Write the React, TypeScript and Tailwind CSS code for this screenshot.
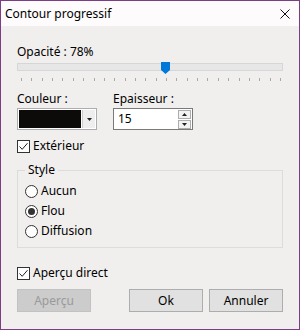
import React from 'react';

const font = { fontFamily: '"Segoe UI", "Noto Sans", "Open Sans", sans-serif' };

const CheckBox: React.FC<{ label: string }> = ({ label }) => (
  <div className="flex items-center h-[16px]">
    <div className="w-[13px] h-[13px] border border-[#333] bg-white flex items-center justify-center">
      <svg width="11" height="11" viewBox="0 0 11 11">
        <path d="M1.5 5.5 L4.2 8.3 L9.5 2.2" fill="none" stroke="#222" strokeWidth="1" />
      </svg>
    </div>
    <span className="ml-[3px] text-[12px] text-black">{label}</span>
  </div>
);

const Radio: React.FC<{ label: string; checked?: boolean }> = ({ label, checked }) => (
  <div className="flex items-center h-[20px]">
    <div className="w-[13px] h-[13px] rounded-full border border-[#333] bg-white flex items-center justify-center">
      {checked && <div className="w-[7px] h-[7px] rounded-full bg-[#333]" />}
    </div>
    <span className="ml-[3px] text-[12px] text-black">{label}</span>
  </div>
);

export default function App() {
  const ticks = Array.from({ length: 26 }, (_, i) => i);

  return (
    <div style={font} className="w-[300px] h-[330px] border border-[#7a3d86] bg-[#f0efee] flex flex-col select-none">
      <div className="h-[25px] bg-[#fdfbfb] flex items-center justify-between pl-[4px] pr-[9px]">
        <span className="text-[12px] text-black">Contour progressif</span>
        <svg width="10" height="10" viewBox="0 0 10 10">
          <path d="M0.5 0.5 L9.5 9.5 M9.5 0.5 L0.5 9.5" stroke="#111" strokeWidth="1" />
        </svg>
      </div>

      <div className="flex flex-col px-[16px] pt-[18px]">
        <div className="text-[12px] leading-[16px] text-black">Opacité : 78%</div>

        <div className="relative h-[22px] mt-[1px]">
          <div className="absolute left-0 right-0 top-[2px] h-[8px] bg-[#e7e7e7] border border-[#d6d6d6]" />
          <svg className="absolute left-[144px] top-[1px]" width="9" height="12" viewBox="0 0 9 12">
            <path d="M0 0 H9 V8 L4.5 12 L0 8 Z" fill="#0078d7" />
          </svg>
          <div className="absolute left-[4px] top-[17px] w-[259px] h-[4px]">
            {ticks.map(i => (
              <div
                key={i}
                className="absolute top-0 w-px h-[3px] bg-[#a8a8a8]"
                style={{ left: Math.round(i * 10.36) }}
              />
            ))}
          </div>
        </div>

        <div className="flex gap-[16px] mt-[8px]">
          <div className="flex flex-col">
            <span className="text-[12px] leading-[16px] text-black">Couleur :</span>
            <div className="mt-[1px] w-[80px] h-[22px] border border-[#adadad] bg-white flex items-center p-px">
              <div className="w-[62px] h-[18px] bg-[#0d0a0a]" />
              <div className="flex-1 h-[18px] flex items-center justify-center bg-[#eeeeee] border-l border-[#cfcfcf] ml-px">
                <svg width="5" height="3" viewBox="0 0 5 3">
                  <path d="M0 0 H5 L2.5 3 Z" fill="#222" />
                </svg>
              </div>
            </div>
          </div>
          <div className="flex flex-col">
            <span className="text-[12px] leading-[16px] text-black">Epaisseur :</span>
            <div className="mt-[1px] w-[80px] h-[22px] border border-[#7a7a7a] bg-white flex items-center">
              <span className="flex-1 pl-[4px] text-[12px] text-black">15</span>
              <div className="flex flex-col gap-px pr-px">
                <div className="w-[13px] h-[9px] border border-[#adadad] bg-[#f3f3f3] flex items-center justify-center">
                  <svg width="5" height="3" viewBox="0 0 5 3"><path d="M0 3 H5 L2.5 0 Z" fill="#222" /></svg>
                </div>
                <div className="w-[13px] h-[9px] border border-[#adadad] bg-[#f3f3f3] flex items-center justify-center">
                  <svg width="5" height="3" viewBox="0 0 5 3"><path d="M0 0 H5 L2.5 3 Z" fill="#222" /></svg>
                </div>
              </div>
            </div>
          </div>
        </div>

        <div className="mt-[8px]">
          <CheckBox label="Extérieur" />
        </div>

        <div className="relative mt-[16px] h-[78px] border border-[#dcdcdc] px-[7px] pt-[10px]">
          <span className="absolute left-[7px] top-[-9px] px-[3px] bg-[#f0efee] text-[12px] leading-[16px] text-black">Style</span>
          <Radio label="Aucun" />
          <Radio label="Flou" checked />
          <Radio label="Diffusion" />
        </div>

        <div className="mt-[17px]">
          <CheckBox label="Aperçu direct" />
        </div>

        <div className="flex mt-[8px] h-[23px]">
          <div className="w-[74px] h-[23px] bg-[#cccccc] border border-[#c2c2c2] flex items-center justify-center text-[12px] text-[#9a9a9a]">Aperçu</div>
          <div className="ml-auto w-[74px] h-[23px] bg-[#e1e1e1] border border-[#adadad] flex items-center justify-center text-[12px] text-black">Ok</div>
          <div className="ml-[6px] w-[74px] h-[23px] bg-[#e1e1e1] border border-[#adadad] flex items-center justify-center text-[12px] text-black">Annuler</div>
        </div>
      </div>
    </div>
  );
}
